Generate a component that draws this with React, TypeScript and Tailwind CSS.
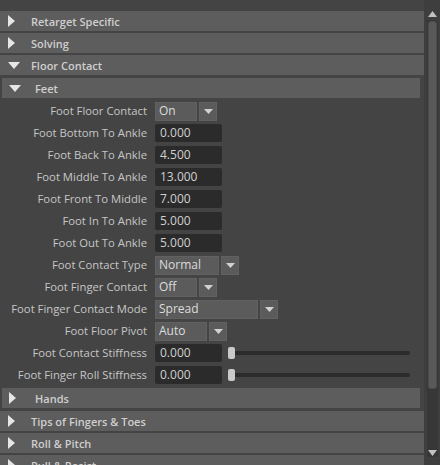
import type { ReactNode } from 'react';

type Field =
  | { kind: 'num'; value: string }
  | { kind: 'enum'; value: string; box: number }
  | { kind: 'slider'; value: string };

interface Attr {
  label: string;
  field: Field;
}

const feetAttrs: Attr[] = [
  { label: 'Foot Floor Contact', field: { kind: 'enum', value: 'On', box: 42 } },
  { label: 'Foot Bottom To Ankle', field: { kind: 'num', value: '0.000' } },
  { label: 'Foot Back To Ankle', field: { kind: 'num', value: '4.500' } },
  { label: 'Foot Middle To Ankle', field: { kind: 'num', value: '13.000' } },
  { label: 'Foot Front To Middle', field: { kind: 'num', value: '7.000' } },
  { label: 'Foot In To Ankle', field: { kind: 'num', value: '5.000' } },
  { label: 'Foot Out To Ankle', field: { kind: 'num', value: '5.000' } },
  { label: 'Foot Contact Type', field: { kind: 'enum', value: 'Normal', box: 64 } },
  { label: 'Foot Finger Contact', field: { kind: 'enum', value: 'Off', box: 42 } },
  { label: 'Foot Finger Contact Mode', field: { kind: 'enum', value: 'Spread', box: 103 } },
  { label: 'Foot Floor Pivot', field: { kind: 'enum', value: 'Auto', box: 52 } },
  { label: 'Foot Contact Stiffness', field: { kind: 'slider', value: '0.000' } },
  { label: 'Foot Finger Roll Stiffness', field: { kind: 'slider', value: '0.000' } },
];

const font = { fontFamily: '"Open Sans", "Noto Sans", Arial, sans-serif' };

function Arrow({ open }: { open: boolean }) {
  return open ? (
    <svg width="12" height="7" viewBox="0 0 12 7" className="block">
      <path d="M0 0 L12 0 L6 7 Z" fill="#e6e6e6" />
    </svg>
  ) : (
    <svg width="7" height="12" viewBox="0 0 7 12" className="block">
      <path d="M0 0 L7 6 L0 12 Z" fill="#e6e6e6" />
    </svg>
  );
}

function Header({ title, open = false, sub = false }: { title: string; open?: boolean; sub?: boolean }) {
  return (
    <div
      className={`h-[20px] bg-[#5d5d5d] flex items-center shrink-0 ${sub ? 'ml-[2px] mr-[4px]' : ''}`}
    >
      <div className={`${sub ? 'w-[33px] pl-[7px]' : 'w-[31px] pl-[8px]'} ${open && !sub ? 'pl-[6px]' : ''}`}>
        <Arrow open={open} />
      </div>
      <span className="text-[11px] font-semibold text-[#cfcfcf] leading-none">{title}</span>
    </div>
  );
}

function EnumBox({ value, box }: { value: string; box: number }) {
  return (
    <div className="flex gap-[2px] h-[19px]">
      <div
        className="bg-[#5b5b5b] border border-[#616161] text-[12px] text-[#dcdcdc] pl-[3px] flex items-center"
        style={{ width: box }}
      >
        {value}
      </div>
      <div className="w-[18px] bg-[#5b5b5b] border border-[#616161] flex items-center justify-center">
        <svg width="9" height="5" viewBox="0 0 9 5">
          <path d="M0 0 L9 0 L4.5 5 Z" fill="#d2d2d2" />
        </svg>
      </div>
    </div>
  );
}

function NumBox({ value }: { value: string }) {
  return (
    <div className="w-[67px] h-[18px] bg-[#2b2b2b] rounded-[2px] text-[12px] text-[#d0d0d0] pl-[5px] flex items-center">
      {value}
    </div>
  );
}

function Row({ label, children }: { label: string; children: ReactNode }) {
  return (
    <div className="flex items-center h-[18px] gap-[8px]">
      <div className="w-[147px] text-right text-[11.3px] text-[#c6c6c6] whitespace-nowrap">{label}</div>
      {children}
    </div>
  );
}

function Scrollbar() {
  return (
    <div className="w-[16px] shrink-0 bg-[#3e3e3e] flex flex-col items-center pt-[11px]">
      <svg width="9" height="6" viewBox="0 0 9 6">
        <path d="M0 6 L9 6 L4.5 0 Z" fill="#c2c2c2" />
      </svg>
      <div className="mt-[3px] w-[11px] h-[437px] bg-[#373737] flex flex-col items-center">
        <div className="mt-[1px] w-[9px] h-[368px] bg-[#595959] rounded-[3px] border border-[#4d4d4d]" />
      </div>
      <svg width="9" height="6" viewBox="0 0 9 6" className="-mt-[7px]">
        <path d="M0 0 L9 0 L4.5 6 Z" fill="#c2c2c2" />
      </svg>
    </div>
  );
}

export default function App() {
  return (
    <div className="w-[440px] h-[465px] bg-[#444444] overflow-hidden flex" style={font}>
      <div className="flex-1 flex flex-col pt-[11px]">
        <Header title="Retarget Specific" />
        <div className="h-[2px] shrink-0" />
        <Header title="Solving" />
        <div className="h-[2px] shrink-0" />
        <Header title="Floor Contact" open />
        <div className="h-[3px] shrink-0" />
        <Header title="Feet" open sub />

        {/* Feet attributes */}
        <div className="flex flex-col gap-[4px] pt-[4px] pb-[4px] shrink-0">
          {feetAttrs.map((a) => (
            <Row key={a.label} label={a.label}>
              {a.field.kind === 'num' && <NumBox value={a.field.value} />}
              {a.field.kind === 'enum' && <EnumBox value={a.field.value} box={a.field.box} />}
              {a.field.kind === 'slider' && (
                <div className="flex items-center">
                  <NumBox value={a.field.value} />
                  <div className="ml-[6px] w-[7px] h-[12px] bg-[#c9c9c9] rounded-[2px] relative z-10" />
                  <div className="-ml-[1px] w-[176px] h-[4px] bg-[#2b2b2b] rounded-full" />
                </div>
              )}
            </Row>
          ))}
        </div>

        <Header title="Hands" sub />
        <div className="h-[3px] shrink-0" />
        <Header title="Tips of Fingers & Toes" />
        <div className="h-[2px] shrink-0" />
        <Header title="Roll & Pitch" />
        <div className="h-[2px] shrink-0" />
        <Header title="Pull & Resist" />
      </div>
      <Scrollbar />
    </div>
  );
}
